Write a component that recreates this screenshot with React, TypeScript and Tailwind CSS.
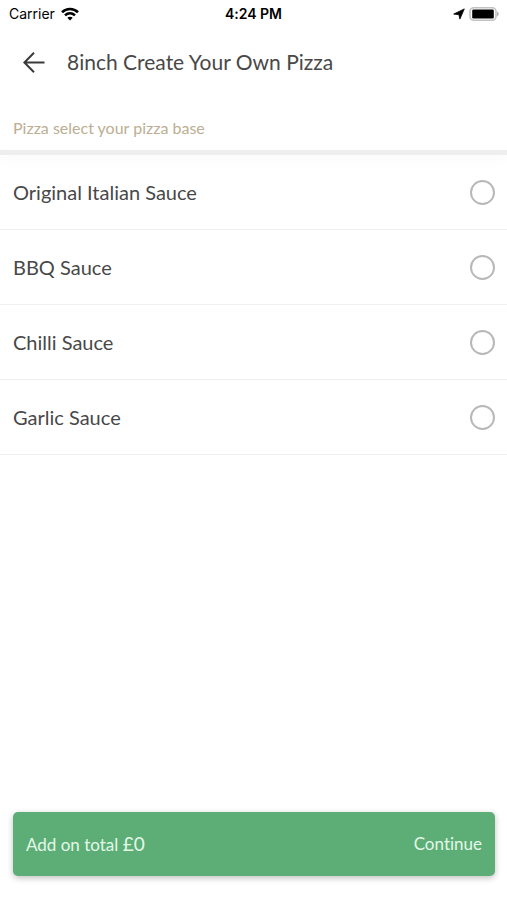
import { useState } from "react";

const sauces = ["Original Italian Sauce", "BBQ Sauce", "Chilli Sauce", "Garlic Sauce"];

function StatusBar() {
  return (
    <div className="grid h-7 grid-cols-3 items-center px-2 font-['Inter',sans-serif] text-sm text-black">
      <div className="flex items-center gap-1.5 pl-px">
        <span>Carrier</span>
        <svg viewBox="0 0 18 14" className="h-3.5 w-[18px]" fill="none" stroke="#000" strokeWidth="2.6" aria-hidden="true">
          <path d="M1 5.2C5.5.9 12.5.9 17 5.2" />
          <path d="M4 8.4c2.9-2.7 7.1-2.7 10 0" />
          <path d="M9 13.4 6.3 10.7c1.5-1.4 3.9-1.4 5.4 0Z" fill="#000" stroke="none" />
        </svg>
      </div>
      <span className="text-center font-semibold">4:24 PM</span>
      <div className="flex items-center justify-end gap-1">
        <svg viewBox="0 0 12 12" className="size-3" aria-hidden="true">
          <path d="M11.3.9 6.9 11.1 5.9 6.7.7 6.1Z" fill="#000" stroke="#000" strokeWidth=".8" strokeLinejoin="round" />
        </svg>
        <svg viewBox="0 0 30 14" className="h-3.5 w-[30px]" aria-hidden="true">
          <rect x="1" y=".8" width="26" height="12.4" rx="3.8" fill="#fff" stroke="#c2c2c2" strokeWidth="1.6" />
          <rect x="3.2" y="2.6" width="21.6" height="8.8" rx="1.2" fill="#000" />
          <path d="M28 4.6c2.4 1.2 2.4 3.6 0 4.8Z" fill="#b5b5b5" />
        </svg>
      </div>
    </div>
  );
}

export default function App() {
  const [selected, setSelected] = useState("");

  return (
    <div className="flex min-h-screen flex-col bg-white font-['Lato',sans-serif] text-[#484848] [font-variant-ligatures:none]">
      <StatusBar />
      <header className="flex h-[67px] items-center gap-[19px] px-5">
        <button type="button" aria-label="Back" className="flex size-7 items-center justify-center">
          <svg viewBox="0 0 24 24" className="size-6" fill="none" stroke="#3a3a3a" strokeWidth="2" aria-hidden="true">
            <path d="M22.5 12.5H3M12 2.7 2.4 12.5l9.6 9.8" />
          </svg>
        </button>
        <h1 className="text-[21px] leading-7">8inch Create Your Own Pizza</h1>
      </header>
      <main className="flex-1">
        <h2 id="base-heading" className="flex h-[55px] items-center px-[13px] pt-2.5 text-base text-[#bbae92]">
          Pizza select your pizza base
        </h2>
        <div className="h-[5px] bg-[#eeeeee] shadow-[0_4px_12px_rgba(0,0,0,0.04)]" />
        <div role="radiogroup" aria-labelledby="base-heading">
          {sauces.map((sauce) => (
            <label key={sauce} className="flex h-[75px] cursor-pointer items-center justify-between border-b border-[#f0f0f0] pr-3 pl-[13px] text-xl">
              <span>{sauce}</span>
              <input
                type="radio"
                name="base"
                value={sauce}
                checked={selected === sauce}
                onChange={() => setSelected(sauce)}
                className="size-[25px] appearance-none rounded-full border-2 border-[#b8b8b8] checked:border-8 checked:border-[#5cae76]"
              />
            </label>
          ))}
        </div>
      </main>
      <footer className="pr-3 pb-6 pl-[13px]">
        <button type="button" className="flex h-16 w-full items-center justify-between rounded-[5px] bg-[#5cae76] px-[13px] text-[17px] text-[#e4f8e8] shadow-[0_2px_6px_rgba(0,0,0,0.25)]">
          <span>
            Add on total <span className="text-[19px]">£0</span>
          </span>
          <span>Continue</span>
        </button>
      </footer>
    </div>
  );
}
